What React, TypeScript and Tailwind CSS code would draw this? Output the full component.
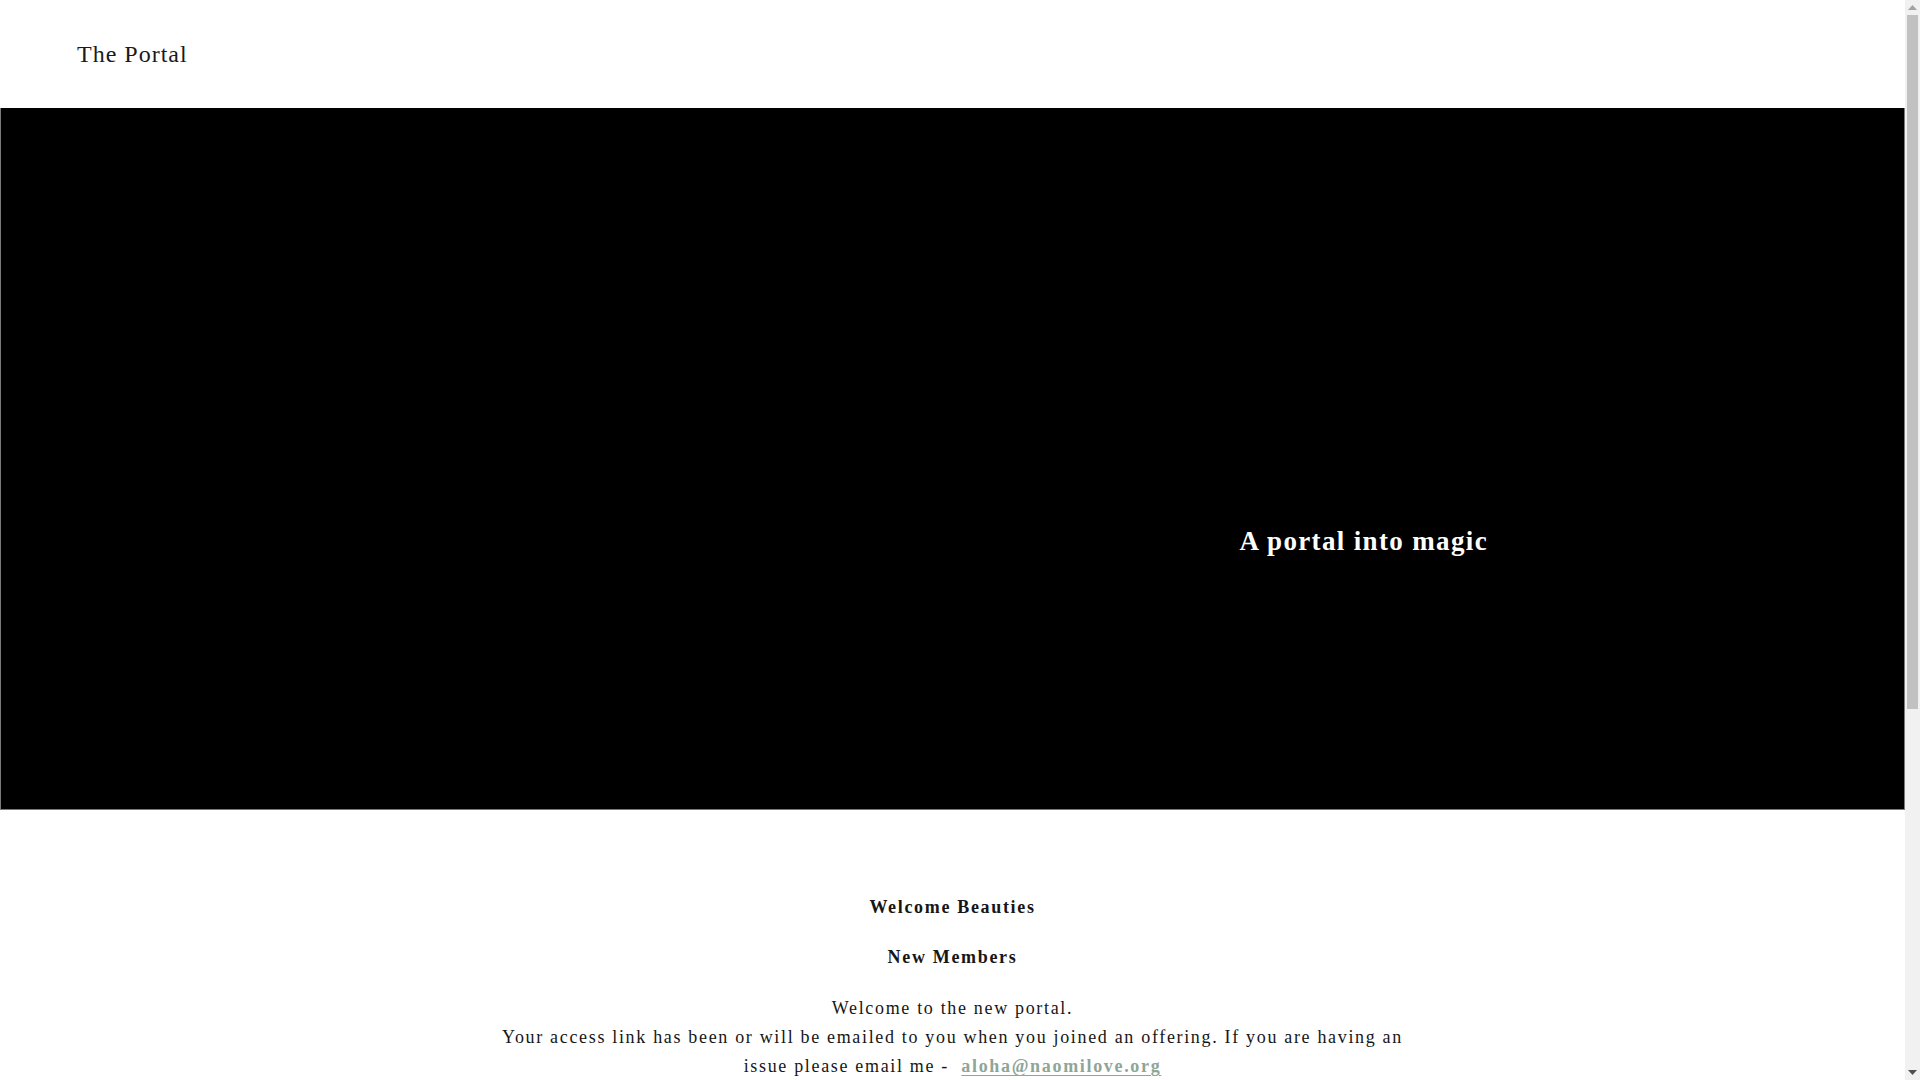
import React from "react";

function FakeScrollbar() {
  return (
    <div className="w-[15px] h-full bg-[#f1f1f1] flex flex-col items-center shrink-0">
      <div className="h-[15px] w-full flex items-center justify-center">
        <svg width="9" height="5" viewBox="0 0 9 5">
          <polygon points="4.5,0 9,5 0,5" fill="#a3a3a3" />
        </svg>
      </div>
      <div className="w-[11px] h-[694px] bg-[#c1c1c1]" />
      <div className="flex-1" />
      <div className="h-[15px] w-full flex items-center justify-center">
        <svg width="9" height="5" viewBox="0 0 9 5">
          <polygon points="0,0 9,0 4.5,5" fill="#505050" />
        </svg>
      </div>
    </div>
  );
}

export default function App() {
  return (
    <div className="h-screen flex overflow-hidden bg-white">
      <div className="flex-1 min-w-0 h-full overflow-hidden">
        <div className="min-h-[1636px] bg-white font-['Liberation_Serif','Times_New_Roman',serif] text-[#161616]">
          <header className="h-[108px] flex items-center pl-[77px]">
            <span className="text-[24px] leading-[28px] tracking-[1px] text-[#1a1a1a]">The Portal</span>
          </header>

          <section className="h-[702px] bg-black border-x border-b border-[#7a7a7a] flex justify-end items-start pt-[416px] pr-[416px]">
            <h1 className="text-[27px] leading-[34px] font-bold tracking-[1.35px] text-white">A portal into magic</h1>
          </section>

          <section className="pt-[83px] flex flex-col items-center gap-[21px] text-[18px] leading-[29.3px] tracking-[1.67px] text-center">
            <p className="font-bold">Welcome Beauties</p>
            <p className="font-bold">New Members</p>
            <p className="whitespace-nowrap">
              Welcome to the new portal.
              <br />
              Your access link has been or will be emailed to you when you joined an offering. If you are having an
              <br />
              issue please email me -{"\u00a0 "}
              <a href="#" className="font-bold text-[#8ea597] underline decoration-[#8ea597] underline-offset-[3px]">
                aloha@naomilove.org
              </a>
            </p>
          </section>
        </div>
      </div>
      <FakeScrollbar />
    </div>
  );
}
